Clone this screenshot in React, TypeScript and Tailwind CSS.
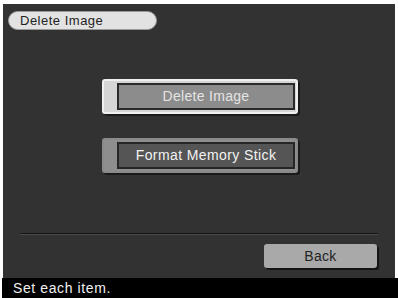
export default function App() {
  const font = { fontFamily: '"Liberation Sans", Arial, sans-serif' };
  return (
    <div className="w-[398px] h-[298px] bg-white flex flex-col" style={font}>
      <div className="ml-[3px] mr-[3px] mt-[4px] h-[274px] bg-[#323232] flex flex-col">
        {/* title pill */}
        <div className="pl-[5px] pt-[7px]">
          <div className="w-[149px] h-[19px] rounded-full bg-[#e2e2e2] border border-[#9a9a9a] flex items-center pl-[11px] text-[13px] text-[#222] tracking-[0.5px]">
            Delete Image
          </div>
        </div>

        <div className="flex flex-col items-center mt-[49px] gap-[24px] pl-[2px]">
          {/* selected button */}
          <div className="w-[196px] h-[35px] rounded-[3px] border-2 border-[#efefef] bg-[#d6d6d6] flex pl-[13px] py-[2px] pr-[1px] shadow-[2px_2px_0_#1a1a1a]">
            <div className="flex-1 border-2 border-[#2a2a2a] bg-[#8c8c8c] flex items-center justify-center text-[14px] text-[#e4e4e4] tracking-[0.3px]">
              Delete Image
            </div>
          </div>
          {/* normal button */}
          <div className="w-[196px] h-[35px] rounded-[3px] border-2 border-[#8a8a8a] bg-[#8e8e8e] flex pl-[13px] py-[2px] pr-[1px] shadow-[2px_2px_0_#1a1a1a]">
            <div className="flex-1 border-2 border-[#262626] bg-[#555555] flex items-center justify-center text-[14px] text-[#f2f2f2] tracking-[0.4px]">
              Format Memory Stick
            </div>
          </div>
        </div>

        <div className="mt-auto px-[17px]">
          <div className="h-[2px] bg-[#141414] border-b border-[#4a4a4a]" />
        </div>
        <div className="flex justify-end pr-[18px] pt-[9px] pb-[10px]">
          <div className="w-[113px] h-[24px] rounded-[3px] bg-[#a9a9a9] shadow-[2px_2px_0_#151515] flex items-center justify-center text-[14px] text-[#222] tracking-[0.3px]">
            Back
          </div>
        </div>
      </div>
      <div className="ml-[2px] h-[20px] bg-black flex items-center pl-[11px] text-[14px] text-[#f0f0f0] tracking-[0.6px]">
        Set each item.
      </div>
    </div>
  );
}
